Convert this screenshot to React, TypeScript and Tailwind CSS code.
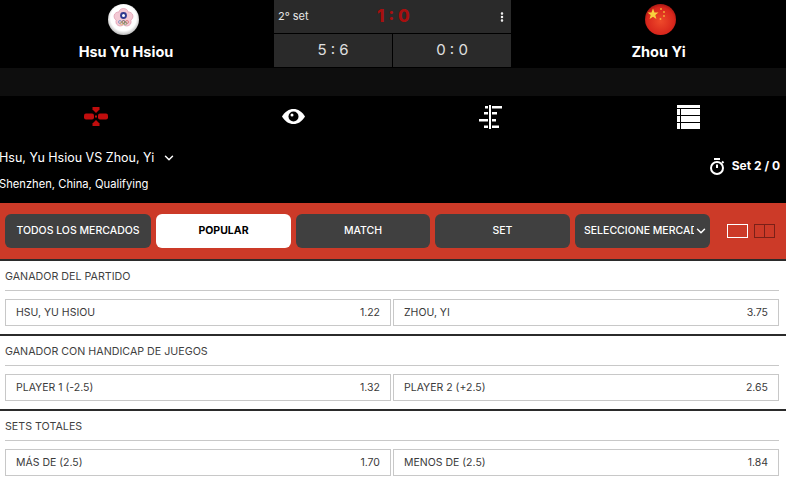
import React from "react";
import { ChevronDown, EllipsisVertical } from "lucide-react";

const poppins = "font-['Inter','Noto_Sans',sans-serif]";

const TaiwanFlag = () => (
  <svg width="31" height="31" viewBox="0 0 31 31">
    <defs>
      <radialGradient id="tw" cx="50%" cy="45%" r="55%">
        <stop offset="0.75" stopColor="#ffffff" />
        <stop offset="1" stopColor="#b9b9b9" />
      </radialGradient>
    </defs>
    <circle cx="15.5" cy="15.5" r="15.5" fill="url(#tw)" />
    <path
      d="M15.5 4.500c2.600 0 4.200 1.600 4.600 3.500 2.200-.2 4.100 1.100 4.700 3.200.5 2.100-.4 3.900-2 4.900.7 2 .2 4.100-1.600 5.200-1.800 1.200-3.900.8-5.700-.5-1.800 1.300-3.900 1.700-5.700.5-1.800-1.100-2.300-3.200-1.600-5.200-1.600-1-2.500-2.800-2-4.900.6-2.100 2.500-3.400 4.700-3.200.4-1.900 2-3.500 4.600-3.500z"
      fill="#f3c9d4"
      stroke="#d98ba3"
      strokeWidth="0.6"
    />
    <circle cx="15.5" cy="11.500" r="3.400" fill="#2f3a8f" />
    <circle cx="15.5" cy="11.500" r="1.500" fill="#ffffff" />
    <g fill="none" strokeWidth="0.6">
      <circle cx="12" cy="18" r="1.5" stroke="#4a7fc0" />
      <circle cx="15.500" cy="18" r="1.5" stroke="#333333" />
      <circle cx="19" cy="18" r="1.5" stroke="#cc5555" />
      <circle cx="13.700" cy="19.300" r="1.5" stroke="#d8b04a" />
      <circle cx="17.300" cy="19.300" r="1.5" stroke="#5aa05a" />
    </g>
  </svg>
);

const ChinaFlag = () => (
  <svg width="31" height="31" viewBox="0 0 31 31">
    <defs>
      <radialGradient id="cn" cx="50%" cy="55%" r="55%">
        <stop offset="0" stopColor="#ee4a2a" />
        <stop offset="0.8" stopColor="#d8261c" />
        <stop offset="1" stopColor="#a81812" />
      </radialGradient>
    </defs>
    <circle cx="15.5" cy="15.5" r="15.5" fill="url(#cn)" />
    <path
      d="M8 4.500l1.500 3.900 4 .1-3.200 2.500 1.100 4-3.400-2.300-3.400 2.300 1.100-4-3.200-2.500 4-.1z"
      fill="#f7d23e"
    />
    <circle cx="16" cy="5" r="0.9" fill="#f4b63a" />
    <circle cx="19" cy="8" r="0.9" fill="#f4b63a" />
    <circle cx="19" cy="12" r="0.9" fill="#f4b63a" />
    <circle cx="15.500" cy="15" r="0.9" fill="#f4b63a" />
  </svg>
);

const GamepadIcon = () => (
  <svg width="24" height="21" viewBox="0 0 24 21" fill="#c00d0d">
    <path d="M8.500 1h7v2.500L12 7 8.500 3.500z" />
    <path d="M8.500 20h7v-2.500L12 14l-3.500 3.500z" />
    <rect x="0" y="7.500" width="10" height="6" rx="2" />
    <rect x="14" y="7.500" width="10" height="6" rx="2" />
    <rect x="11" y="9.500" width="2" height="2" />
  </svg>
);

const EyeIcon = () => (
  <svg width="23" height="15" viewBox="0 0 23 15">
    <path d="M0 7.500C3 2.500 7 0 11.500 0S20 2.500 23 7.500C20 12.500 16 15 11.500 15S3 12.500 0 7.500z" fill="#ffffff" />
    <circle cx="11.500" cy="7.500" r="5" fill="#000000" />
    <circle cx="10" cy="6" r="1.500" fill="#ffffff" />
  </svg>
);

const TimelineIcon = () => (
  <svg width="24" height="24" viewBox="0 0 24 24" fill="#ffffff">
    <rect x="10" y="0" width="2" height="24" />
    <rect x="6" y="1" width="3" height="2.500" />
    <rect x="13" y="1" width="10" height="2.500" />
    <rect x="5" y="7" width="4" height="2.500" />
    <rect x="13" y="7" width="5" height="2.500" />
    <rect x="0" y="14" width="9" height="2.500" />
    <rect x="13" y="14" width="4" height="2.500" />
    <rect x="5" y="20.500" width="4" height="2.500" />
    <rect x="13" y="20.500" width="7" height="2.500" />
  </svg>
);

const TableIcon = () => (
  <svg width="23" height="24" viewBox="0 0 23 24" fill="#ffffff">
    <rect x="0" y="0" width="23" height="3" />
    <rect x="0" y="4" width="3" height="6" />
    <rect x="4" y="4" width="19" height="6" />
    <rect x="0" y="11" width="3" height="6" />
    <rect x="4" y="11" width="19" height="6" />
    <rect x="0" y="18" width="3" height="6" />
    <rect x="4" y="18" width="19" height="6" />
  </svg>
);

const StopwatchIcon = () => (
  <svg width="16" height="17" viewBox="0 0 16 17" fill="none" stroke="#ffffff" strokeWidth="2">
    <circle cx="8" cy="10" r="6" />
    <path d="M5 1h6" />
    <path d="M8 6.500V10" />
    <path d="M13 3.500l1.500 1.500" />
  </svg>
);

const tabClass = "h-[34px] rounded-md bg-[#404040] flex items-center justify-center text-[10.500px] font-medium text-white";

const OddCell = ({ label, odd }: { label: string; odd: string }) => (
  <div className="h-[27px] flex-1 border border-[#c8c8c8] bg-white flex items-center justify-between pl-[10px] pr-[10px] text-[10.500px] text-[#3a3a3a]">
    <span>{label}</span>
    <span>{odd}</span>
  </div>
);

const Market = ({
  title,
  cells,
  last,
}: {
  title: string;
  cells: { label: string; odd: string }[];
  last?: boolean;
}) => (
  <section className={`h-[75px] px-[5px] ${last ? "" : "border-b-2 border-[#2b2b2b]"}`}>
    <div className="h-[30px] w-[774px] border-b border-[#c8c8c8] flex items-center pt-[4px] text-[10.700px] text-[#3f3f3f]">
      {title}
    </div>
    <div className="mt-2 flex gap-[2px] w-[774px]">
      {cells.map((cell, index) => (
        <OddCell key={index} label={cell.label} odd={cell.odd} />
      ))}
    </div>
  </section>
);

export default function App() {
  return (
    <div className={`w-[786px] h-[478px] overflow-hidden bg-white ${poppins}`}>
      <header className="h-[68px] bg-black flex">
        <div className="w-[274px] flex flex-col items-center pr-[22px] pt-1">
          <div className="mr-[6px]">
            <TaiwanFlag />
          </div>
          <div className="mt-[7px] text-[14.500px] leading-[20px] font-bold text-white">Hsu Yu Hsiou</div>
        </div>
        <div className="w-[237px] flex flex-col gap-px">
          <div className="h-[33px] bg-[#2a2a2a] flex items-center pl-[4px] pr-[3px]">
            <span className="text-[11px] text-[#e8e8e8]">2° set</span>
            <span className="flex-1 text-center text-[17px] font-extrabold text-[#a80f0f] pr-[18px]">1 : 0</span>
            <EllipsisVertical size={12} strokeWidth={3} className="text-white" />
          </div>
          <div className="h-[33px] flex gap-px">
            <div className="flex-1 bg-[#2a2a2a] flex items-center justify-center text-[15px] text-[#e0e0e0]">5 : 6</div>
            <div className="flex-1 bg-[#2a2a2a] flex items-center justify-center text-[15px] text-[#e0e0e0]">0 : 0</div>
          </div>
        </div>
        <div className="flex-1 flex flex-col items-center pl-[20px] pt-1">
          <div className="ml-[4px]">
            <ChinaFlag />
          </div>
          <div className="mt-[7px] text-[14.500px] leading-[20px] font-bold text-white">Zhou Yi</div>
        </div>
      </header>

      <div className="h-[28px] bg-[#0e0e0e]" />

      <div className="h-[107px] bg-black">
        <nav className="h-[44px] grid grid-cols-4 items-center pb-[3px]">
          <div className="flex justify-center pr-[4px]"><GamepadIcon /></div>
          <div className="flex justify-center pr-[2px]"><EyeIcon /></div>
          <div className="flex justify-center"><TimelineIcon /></div>
          <div className="flex justify-center pl-[2px]"><TableIcon /></div>
        </nav>
        <div className="flex justify-between">
          <div>
            <div className="-ml-[1px] mt-[8px] h-[20px] flex items-center text-[12.500px] text-white">
              Hsu, Yu Hsiou VS Zhou, Yi
              <ChevronDown size={14} strokeWidth={2.500} className="ml-[8px]" />
            </div>
            <div className="-ml-[1px] mt-[8px] text-[11.200px] leading-[16px] text-white">Shenzhen, China, Qualifying</div>
          </div>
          <div className="mt-[16px] mr-[6px] h-[20px] flex items-center gap-[7px] text-[12px] font-bold text-white">
            <StopwatchIcon />
            Set 2 / 0
          </div>
        </div>
      </div>

      <div className="h-[58px] bg-[#cc3a28] border-b-2 border-[#2b2b2b] flex items-center pl-[5px]">
        <button className={`${tabClass} w-[146px]`}>TODOS LOS MERCADOS</button>
        <button className="h-[34px] w-[135px] ml-[5px] rounded-md bg-white flex items-center justify-center text-[10.500px] font-bold text-black">POPULAR</button>
        <button className={`${tabClass} w-[134px] ml-[5px]`}>MATCH</button>
        <button className={`${tabClass} w-[135px] ml-[5px]`}>SET</button>
        <button className={`${tabClass} w-[135px] ml-[5px] justify-start pl-[9px] whitespace-nowrap`}>
          <span className="w-[110px] overflow-hidden text-left">SELECCIONE MERCADO</span>
          <ChevronDown size={14} strokeWidth={2.500} />
        </button>
        <div className="ml-[17px] w-[21px] h-[14px] border border-white" />
        <div className="ml-[6px] w-[21px] h-[14px] border border-[#7a2018] flex">
          <div className="w-1/2 border-r border-[#7a2018]" />
        </div>
      </div>

      <Market
        title="GANADOR DEL PARTIDO"
        cells={[
          { label: "HSU, YU HSIOU", odd: "1.22" },
          { label: "ZHOU, YI", odd: "3.75" },
        ]}
      />
      <Market
        title="GANADOR CON HANDICAP DE JUEGOS"
        cells={[
          { label: "PLAYER 1 (-2.5)", odd: "1.32" },
          { label: "PLAYER 2 (+2.5)", odd: "2.65" },
        ]}
      />
      <Market
        last
        title="SETS TOTALES"
        cells={[
          { label: "MÁS DE (2.5)", odd: "1.70" },
          { label: "MENOS DE (2.5)", odd: "1.84" },
        ]}
      />
    </div>
  );
}
